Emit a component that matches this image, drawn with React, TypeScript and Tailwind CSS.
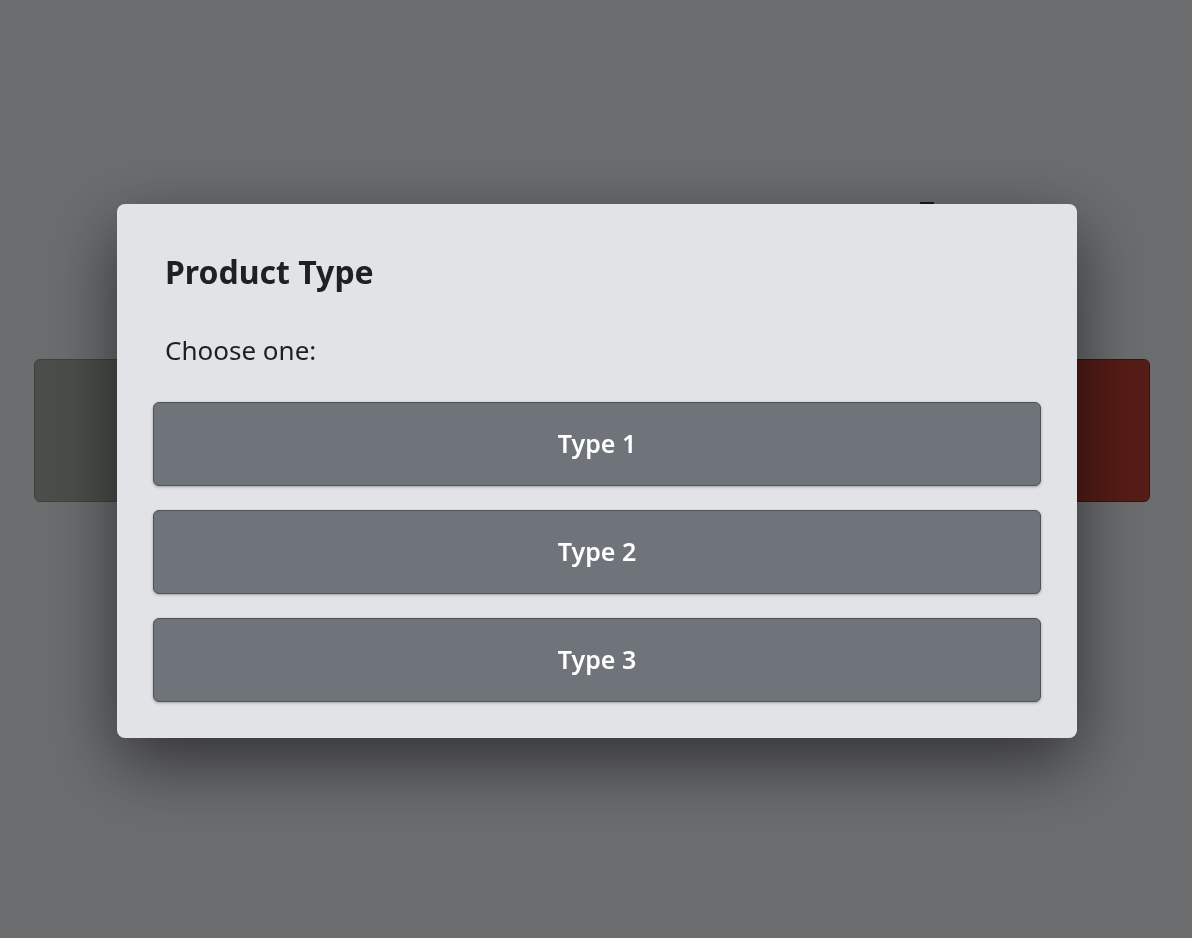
import React from 'react';

const types = ['Type 1', 'Type 2', 'Type 3'];

const ProductTypeModal: React.FC = () => {
    return (
        <div className="fixed inset-0 flex items-start justify-center pt-[204px] pl-[2px]">
            <div className="w-[960px] rounded-lg bg-[#e2e3e6] px-9 pt-12 pb-9 shadow-[0_24px_70px_rgba(0,0,0,0.55)]">
                <h2 className="px-3 text-[32px] font-bold leading-[40px] text-[#1f2023]">Product Type</h2>
                <p className="mt-[41px] px-3 text-[26px] leading-[34px] text-[#1e1f22]">Choose one:</p>
                <div className="mt-[35px] flex flex-col gap-6">
                    {types.map((t) => (
                        <button
                            key={t}
                            className="h-[84px] w-full rounded-md border border-[#4f5358] bg-[#6f747b] text-[25px] font-semibold text-white shadow-[0_1px_3px_rgba(0,0,0,0.3)]"
                        >
                            {t}
                        </button>
                    ))}
                </div>
            </div>
        </div>
    );
};

export default function App() {
    return (
        <div
            className="relative h-[938px] w-full overflow-hidden bg-[#6c6d6f]"
            style={{ fontFamily: '"Noto Sans", "Open Sans", sans-serif' }}
        >
            <div className="flex gap-4 pl-[34px] pr-[42px] pt-[359px]">
                <div className="h-[143px] flex-1 rounded-md border border-[#3f423f] bg-[#4b4f4b]" />
                <div className="h-[143px] flex-1 rounded-md border border-[#3a1410] bg-gradient-to-r from-[#401713] to-[#571d17]" />
            </div>
            <div className="absolute left-[920px] top-[202px] h-[3px] w-[14px] bg-[#1b1b1b]" />
            <ProductTypeModal />
        </div>
    );
}
